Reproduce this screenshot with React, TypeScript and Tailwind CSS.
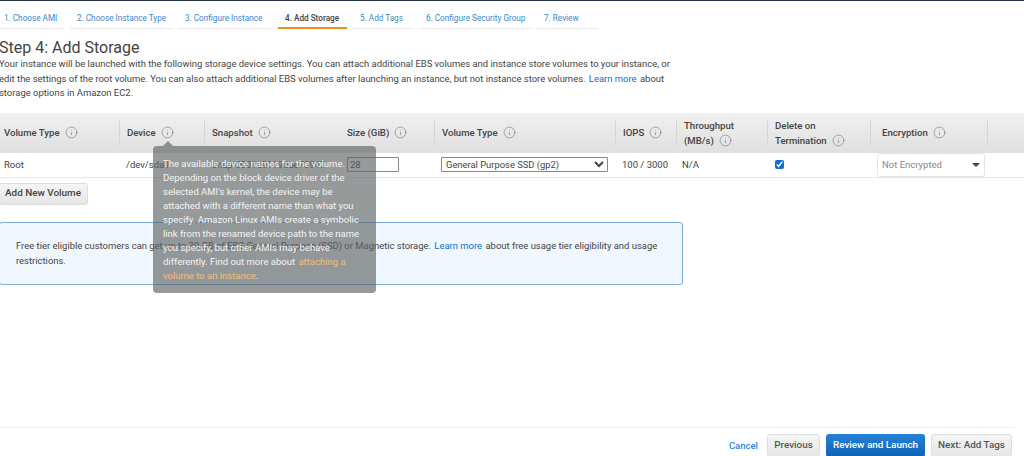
import React from 'react';
import { Info } from 'lucide-react';

const steps = [
  { label: '1. Choose AMI', width: 'w-[64px] pl-[4px]' },
  { label: '2. Choose Instance Type', width: 'w-[102px] pl-[7px]' },
  { label: '3. Configure Instance', width: 'w-[94px] pl-[7px]' },
  { label: '4. Add Storage', width: 'w-[69px] pl-[7px]', active: true },
  { label: '5. Add Tags', width: 'w-[60px] pl-[7px]' },
  { label: '6. Configure Security Group', width: 'w-[112px] pl-[7px]' },
  { label: '7. Review', width: 'w-[61px] pl-[7px]' },
];

const gridCols = 'grid grid-cols-[119px_85px_135px_95px_181px_61px_91px_103px_117px_37px]';

const Hint = () => <Info size={13} strokeWidth={1} className="inline-block text-[#666] ml-[5px] align-[-3px]" />;

const HeadCell = ({ children, first, className }: { children?: React.ReactNode; first?: boolean; className?: string }) => (
  <div className={`flex items-center h-[25px] text-[9.6px] leading-[15px] font-medium text-[#444] ${first ? 'pl-1' : 'pl-[7px] border-l border-[#d5d5d5]'} ${className ?? ''}`}>
    <div>{children}</div>
  </div>
);

export default function App() {
  return (
    <div className="h-[456px] w-[1024px] overflow-hidden relative flex flex-col bg-white text-[#444] font-['Roboto',sans-serif] border-t border-[#232f3e]">
      <div className="flex gap-[6px] mt-[11px]">
        {steps.map((s) => (
          <div
            key={s.label}
            className={`h-[17px] shrink-0 whitespace-nowrap text-[8.2px] leading-[13px] border-b ${s.width} ${
              s.active ? 'border-b-2 border-[#ec8f1c] text-[#444] font-medium' : 'border-[#e8e8e8] text-[#3b87c9]'
            }`}
          >
            {s.label}
          </div>
        ))}
      </div>

      <h1 className="text-[16px] leading-5 font-normal text-[#444] mt-[9px] ml-[-1px]">Step 4: Add Storage</h1>
      <p className="text-[9.45px] leading-[14.5px] text-[#444] ml-[-1px] w-[680px] mt-[-1px]">
        Your instance will be launched with the following storage device settings. You can attach additional EBS volumes and instance store volumes to your instance, or edit the settings of the root volume. You can also attach additional EBS volumes after launching an instance, but not instance store volumes.{' '}
        <span className="text-[#0f6fc6] mx-[1px]">Learn more</span> about storage options in Amazon EC2.
      </p>

      <div className={`${gridCols} items-center h-10 mt-[12px] bg-gradient-to-b from-[#f1f1f1] to-[#dfdfdf]`}>
        <HeadCell first>Volume Type<Hint /></HeadCell>
        <HeadCell>Device<Hint /></HeadCell>
        <HeadCell>Snapshot<Hint /></HeadCell>
        <HeadCell className="!border-l-0 !pl-2">Size (GiB)<Hint /></HeadCell>
        <HeadCell>Volume Type<Hint /></HeadCell>
        <HeadCell>IOPS<Hint /></HeadCell>
        <HeadCell>Throughput<br />(MB/s)<Hint /></HeadCell>
        <HeadCell>Delete on<br />Termination<Hint /></HeadCell>
        <HeadCell className="!pl-[11px]">Encryption<Hint /></HeadCell>
        <HeadCell />
      </div>

      <div className={`${gridCols} items-center h-[25px] border-b border-[#e6e6e6] text-[9.5px]`}>
        <div className="pl-1 pt-[2px]">Root</div>
        <div className="pl-[7px] pt-[2px]">/dev/sda1</div>
        <div className="pl-2 pt-[2px] whitespace-nowrap">snap-0001e9119dae70947</div>
        <div className="pl-2">
          <input readOnly value="28" className="w-[52px] h-[15px] border border-[#888] rounded-[1px] px-[2px] text-[9.5px] text-[#444] outline-none" />
        </div>
        <div className="pl-[7px]">
          <select className="w-[167px] h-[15px] border border-[#888] rounded-[1px] bg-white text-[9.4px] text-[#444] outline-none">
            <option>General Purpose SSD (gp2)</option>
          </select>
        </div>
        <div className="pl-[7px] pt-[2px]">100 / 3000</div>
        <div className="pl-[6px] pt-[2px]">N/A</div>
        <div className="pl-2 flex">
          <input type="checkbox" readOnly checked className="w-[9px] h-[9px] accent-[#0a6fd8]" />
        </div>
        <div className="pl-[7px]">
          <div className="w-[108px] h-[24px] border border-[#e4e4e4] rounded-[3px] bg-white flex items-center justify-between pl-[4px] pr-[4px] pt-[1px] text-[#888]">
            <span>Not Encrypted</span>
            <span className="w-0 h-0 border-x-[4.5px] border-x-transparent border-t-[4.5px] border-t-[#444]" />
          </div>
        </div>
        <div />
      </div>

      <div className="mt-[5px] ml-[-2px]">
        <button className="block h-[22px] w-[90px] rounded-[3px] border border-[#ddd] bg-gradient-to-b from-[#f5f5f5] to-[#e6e6e6] text-[9.9px] font-medium text-[#444]">
          Add New Volume
        </button>
      </div>

      <div className="mt-[17px] ml-[-1px] w-[684px] h-[63px] rounded-[3px] border border-[#7fabd9] bg-[#f0f7ff] pl-[16px] pr-4 pt-[15px] text-[9.45px] leading-[15px] text-[#444]">
        Free tier eligible customers can get up to 30 GB of EBS General Purpose (SSD) or Magnetic storage.{' '}
        <span className="text-[#0f6fc6] mx-[1px]">Learn more</span> about free usage tier eligibility and usage restrictions.
      </div>

      <div className="mt-auto mr-[9px] border-t border-[#eee] h-[29px] flex items-start justify-end gap-[6px] pt-[6px] pr-[3px]">
        <span className="text-[9.5px] font-medium text-[#2b87e0] leading-[23px] mr-[3px]">Cancel</span>
        <button className="h-[23px] w-[53px] rounded-[3px] border border-[#ddd] bg-gradient-to-b from-[#f5f5f5] to-[#e6e6e6] text-[9.9px] font-medium text-[#555]">Previous</button>
        <button className="h-[23px] w-[99px] rounded-[3px] bg-gradient-to-b from-[#2481d6] to-[#0e62b5] text-[9.9px] font-medium text-white">Review and Launch</button>
        <button className="h-[23px] w-[81px] rounded-[3px] border border-[#ddd] bg-gradient-to-b from-[#f5f5f5] to-[#e6e6e6] text-[9.9px] font-medium text-[#555]">Next: Add Tags</button>
      </div>

      {/* tooltip over the device column */}
      <div className="absolute left-[153px] top-[145px] w-[223px] h-[147px] rounded-[4px] bg-[rgba(95,100,100,0.65)] px-[10px] pt-[11px] text-[9.5px] leading-[14px] text-[#f4f4f4]">
        <span className="absolute left-[10px] top-[-5px] w-0 h-0 border-x-[5px] border-x-transparent border-b-[5px] border-b-[rgba(95,100,100,0.65)]" />
        The available device names for the volume. Depending on the block device driver of the selected AMI's kernel, the device may be attached with a different name than what you specify. Amazon Linux AMIs create a symbolic link from the renamed device path to the name you specify, but other AMIs may behave differently. Find out more about{' '}
        <span className="text-[#f0bd7a] ml-[1px]">attaching a volume to an instance</span>.
      </div>
    </div>
  );
}
